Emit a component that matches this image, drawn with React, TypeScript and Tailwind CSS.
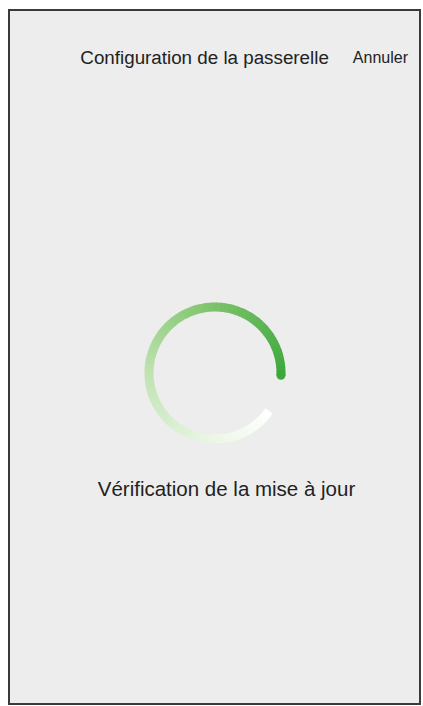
import React from "react";

function Spinner() {
  const cx = 75;
  const cy = 75;
  const r = 66;
  const start = 35; // degrees, clockwise from 3 o'clock (white end)
  const end = 362; // dark green end
  const n = 90;
  const stops = [
    { t: 0, c: [255, 255, 255] },
    { t: 0.2, c: [232, 245, 226] },
    { t: 0.45, c: [190, 226, 176] },
    { t: 0.7, c: [128, 196, 110] },
    { t: 1, c: [60, 168, 60] },
  ];
  const colorAt = (t: number) => {
    for (let i = 0; i < stops.length - 1; i++) {
      const a = stops[i];
      const b = stops[i + 1];
      if (t >= a.t && t <= b.t) {
        const k = (t - a.t) / (b.t - a.t);
        const c = a.c.map((v, j) => Math.round(v + (b.c[j] - v) * k));
        return `rgb(${c[0]},${c[1]},${c[2]})`;
      }
    }
    return "rgb(60,168,60)";
  };
  const pt = (deg: number) => {
    const rad = (deg * Math.PI) / 180;
    return [cx + r * Math.cos(rad), cy + r * Math.sin(rad)];
  };
  const segs = [];
  for (let i = 0; i < n; i++) {
    const a0 = start + ((end - start) * i) / n;
    const a1 = start + ((end - start) * (i + 1)) / n + 0.6;
    const [x0, y0] = pt(a0);
    const [x1, y1] = pt(Math.min(a1, end));
    segs.push(
      <path
        key={i}
        d={`M ${x0} ${y0} A ${r} ${r} 0 0 1 ${x1} ${y1}`}
        stroke={colorAt((i + 0.5) / n)}
        strokeWidth={9}
        fill="none"
      />
    );
  }
  const [ex, ey] = pt(end);
  return (
    <svg width="150" height="150" viewBox="0 0 150 150">
      {segs}
      <circle cx={ex} cy={ey} r={4.5} fill="rgb(60,168,60)" />
    </svg>
  );
}

export default function App() {
  return (
    <div
      className="w-[423px] h-[706px] bg-white pt-[9px] pl-[8px]"
      style={{ fontFamily: '"Liberation Sans", Arial, sans-serif' }}
    >
      <div className="w-[413px] h-[696px] border-2 border-[#3a3a3a] bg-[#ededed] flex flex-col">
        <div className="flex items-center justify-end gap-[24px] pr-[11px] mt-[35px] h-[24px]">
          <span className="text-[18.8px] text-[#222]">Configuration de la passerelle</span>
          <span className="text-[16px] text-[#222]">Annuler</span>
        </div>
        <div className="flex justify-center mt-[228px]">
          <Spinner />
        </div>
        <div className="flex justify-center mt-[26px] pl-[24px]">
          <span className="text-[20.5px] text-[#222]">Vérification de la mise à jour</span>
        </div>
      </div>
    </div>
  );
}
